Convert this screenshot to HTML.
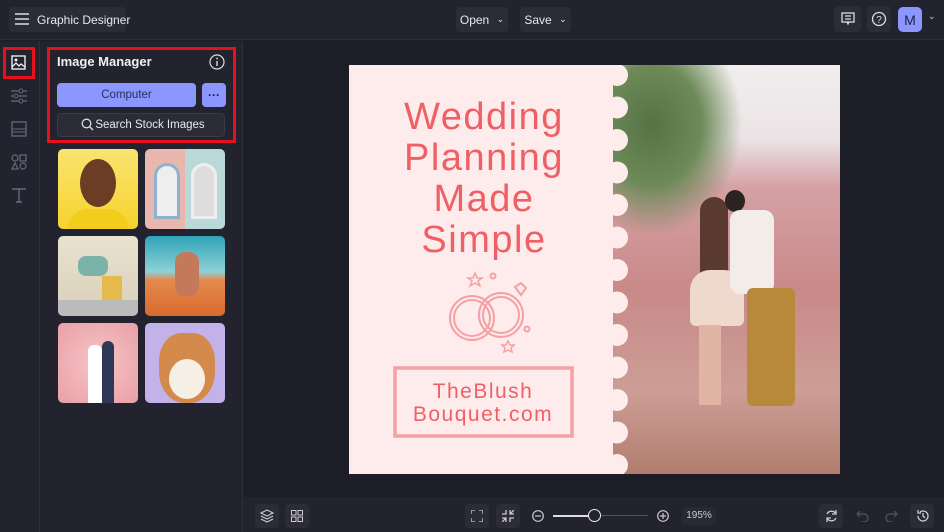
<!DOCTYPE html>
<html><head><meta charset="utf-8"><style>
*{box-sizing:border-box;margin:0;padding:0}
body{width:944px;height:532px;overflow:hidden;background:#1c1d27;font-family:"Liberation Sans",sans-serif;color:#e6e7ee;position:relative}
.abs{position:absolute}
.top{left:0;top:0;width:944px;height:40px;background:#22232e;border-bottom:1px solid #2d2e3a}
.btn{position:absolute;background:#2b2c38;border-radius:4px;font-size:12px;color:#e8e8f0;display:flex;align-items:center;justify-content:center;white-space:nowrap}
.rail{left:0;top:41px;width:40px;height:491px;background:#22232e;border-right:1px solid #2f303c}
.panel{left:40px;top:41px;width:203px;height:491px;background:#22232e;border-right:1px solid #2f303c}
.th{position:absolute;width:80px;height:80px;border-radius:5px;overflow:hidden}
.bottom{left:243px;top:497px;width:701px;height:35px;background:#22232e}
.ib{position:absolute;top:504px;width:24px;height:24px;background:#2b2c38;border-radius:4px}
svg{position:absolute}
</style></head><body>
<div class="abs top"></div>
<div class="btn" style="left:9px;top:7px;width:117px;height:25px;justify-content:flex-start;padding-left:28px;font-size:12px">Graphic Designer</div>
<svg style="left:15px;top:13px" width="14" height="12"><path d="M0 1H14M0 6H14M0 11H14" stroke="#ddd" stroke-width="1.5"/></svg>
<div class="btn" style="left:456px;top:7px;width:52px;height:25px">Open&nbsp;<span style="font-size:9px;margin-left:4px">&#8964;</span></div>
<div class="btn" style="left:520px;top:7px;width:51px;height:25px">Save&nbsp;<span style="font-size:9px;margin-left:4px">&#8964;</span></div>
<div class="btn" style="left:834px;top:6px;width:27px;height:26px"></div>
<svg style="left:841px;top:12px" width="14" height="14"><rect x="1" y="1" width="12" height="9" fill="none" stroke="#ddd" stroke-width="1.3"/><path d="M4 4H10M4 7H10M6 10L7 12L8 10" stroke="#ddd" stroke-width="1.2" fill="none"/></svg>
<div class="btn" style="left:867px;top:6px;width:24px;height:26px"></div>
<svg style="left:871px;top:11px" width="16" height="16"><circle cx="8" cy="8" r="6.5" fill="none" stroke="#ddd" stroke-width="1.3"/><text x="8" y="12" font-size="10" text-anchor="middle" fill="#ddd" font-family="Liberation Sans">?</text></svg>
<div class="btn" style="left:898px;top:7px;width:24px;height:25px;background:#8b97ff;color:#1e2040;font-size:14px;border-radius:5px">M</div>
<div class="abs" style="left:928px;top:11px;font-size:9px;color:#ccc">&#8964;</div>

<div class="abs rail"></div>
<div class="abs" style="left:3px;top:47px;width:32px;height:32px;border:3px solid #e8101a"></div>
<svg style="left:11px;top:55px" width="16" height="16"><rect x="1" y="1" width="13" height="13" fill="none" stroke="#eee" stroke-width="1.4"/><circle cx="5" cy="5" r="1.5" fill="#eee"/><path d="M1 12L5 8L8 11L10 9L14 12" stroke="#eee" fill="none" stroke-width="1.3"/></svg>
<svg style="left:11px;top:88px" width="16" height="16"><path d="M0 3H16M0 8H16M0 13H16" stroke="#666a78" stroke-width="1.3"/><circle cx="10" cy="3" r="2" fill="#22232e" stroke="#666a78"/><circle cx="5" cy="8" r="2" fill="#22232e" stroke="#666a78"/><circle cx="10" cy="13" r="2" fill="#22232e" stroke="#666a78"/></svg>
<svg style="left:11px;top:121px" width="16" height="16"><rect x="1" y="1" width="14" height="14" fill="none" stroke="#666a78" stroke-width="1.3"/><path d="M1 8H15M1 11H15" stroke="#666a78"/></svg>
<svg style="left:11px;top:154px" width="16" height="16"><circle cx="4" cy="4" r="3" fill="none" stroke="#666a78" stroke-width="1.2"/><rect x="9" y="1" width="6" height="6" fill="none" stroke="#666a78" stroke-width="1.2"/><path d="M4 9L7 15H1Z" fill="none" stroke="#666a78" stroke-width="1.2"/><circle cx="12" cy="12" r="3" fill="none" stroke="#666a78" stroke-width="1.2"/></svg>
<svg style="left:11px;top:187px" width="16" height="16"><path d="M1 2H15M8 2V15M5 15H11" stroke="#666a78" stroke-width="1.4" fill="none"/></svg>

<div class="abs panel"></div>
<div class="abs" style="left:47px;top:47px;width:189px;height:96px;border:3px solid #e8101a"></div>
<div class="abs" style="left:57px;top:54px;font-size:13px;font-weight:bold;color:#f0f0f5">Image Manager</div>
<svg style="left:209px;top:54px" width="16" height="16"><circle cx="8" cy="8" r="7" fill="none" stroke="#ddd" stroke-width="1.2"/><path d="M8 7V12" stroke="#ddd" stroke-width="1.4"/><circle cx="8" cy="4.5" r="0.9" fill="#ddd"/></svg>
<div class="btn" style="left:57px;top:83px;width:139px;height:24px;background:#8b97ff;color:#2a2d5a;font-size:11.5px">Computer</div>
<div class="btn" style="left:202px;top:83px;width:24px;height:24px;background:#8b97ff;color:#1e2040;font-weight:bold;font-size:12px">···</div>
<div class="btn" style="left:57px;top:113px;width:168px;height:24px;border:1px solid #3a3b48;font-size:11.5px;padding-left:18px">Search Stock Images</div>
<svg style="left:81px;top:118px" width="13" height="13"><circle cx="5.5" cy="5.5" r="4.3" fill="none" stroke="#ddd" stroke-width="1.3"/><path d="M8.5 8.5L12 12" stroke="#ddd" stroke-width="1.4"/></svg>

<div class="th" style="left:58px;top:149px;background:linear-gradient(#f8e571,#f7d22d)"><div class="abs" style="left:22px;top:10px;width:36px;height:48px;border-radius:50%;background:#6b3d24"></div><div class="abs" style="left:10px;top:60px;width:60px;height:24px;border-radius:20px 20px 0 0;background:#f3cd1c"></div></div>
<div class="th" style="left:145px;top:149px;background:linear-gradient(90deg,#e9b7ae 50%,#b9d9d8 50%)"><div class="abs" style="left:9px;top:14px;width:26px;height:56px;border-radius:13px 13px 0 0;background:#eee;border:3px solid #8fb1d0"></div><div class="abs" style="left:46px;top:14px;width:26px;height:56px;border-radius:13px 13px 0 0;background:#ddd;border:3px solid #eee"></div></div>
<div class="th" style="left:58px;top:236px;background:linear-gradient(#e8e2d0,#dcd3bd 80%,#bbb 80%)"><div class="abs" style="left:20px;top:20px;width:30px;height:20px;background:#7ab3a8;border-radius:8px"></div><div class="abs" style="left:44px;top:40px;width:20px;height:24px;background:#e6b94b"></div></div>
<div class="th" style="left:145px;top:236px;background:linear-gradient(#2fa4b8,#8fd0d6 45%,#e58a4c 55%,#d96a2f)"><div class="abs" style="left:30px;top:16px;width:24px;height:44px;background:#c47a5a;border-radius:10px"></div></div>
<div class="th" style="left:58px;top:323px;background:radial-gradient(#f7c4c7,#e8a0a7)"><div class="abs" style="left:30px;top:22px;width:14px;height:58px;background:#fff;border-radius:6px 6px 0 0"></div><div class="abs" style="left:44px;top:18px;width:12px;height:62px;background:#2e3856;border-radius:6px 6px 0 0"></div></div>
<div class="th" style="left:145px;top:323px;background:#c3b2ea"><div class="abs" style="left:14px;top:10px;width:56px;height:70px;background:#d48a4a;border-radius:40% 40% 45% 45%"></div><div class="abs" style="left:24px;top:36px;width:36px;height:40px;background:#f6efe6;border-radius:50%"></div></div>

<!-- canvas -->
<div class="abs" style="left:612px;top:65px;width:228px;height:409px;background:radial-gradient(ellipse 90px 110px at 40px 60px,#557244 0%,#6d8a58 55%,rgba(0,0,0,0) 100%),linear-gradient(#f1eeee 0%,#ebe4e6 18%,#d5a0a4 30%,#c98989 55%,#cc9e96 80%,#b17c6e 100%)"></div>
<div class="abs" style="left:700px;top:197px;width:28px;height:110px;background:#5a3a2e;border-radius:14px 14px 4px 4px"></div>
<div class="abs" style="left:690px;top:270px;width:54px;height:56px;background:#efd8cc;border-radius:20px 20px 6px 6px"></div>
<div class="abs" style="left:725px;top:190px;width:20px;height:22px;background:#2b2222;border-radius:50%"></div>
<div class="abs" style="left:730px;top:210px;width:44px;height:84px;background:#f2ede9;border-radius:10px"></div>
<div class="abs" style="left:747px;top:288px;width:48px;height:118px;background:#b8893a;border-radius:6px"></div>
<div class="abs" style="left:699px;top:325px;width:22px;height:80px;background:#e0b5a3"></div>

<svg style="left:349px;top:65px" width="282" height="409">
<defs><clipPath id="c"><rect width="282" height="409"/></clipPath></defs>
<g clip-path="url(#c)">
<rect width="264" height="409" fill="#fdeceb"/>
<g fill="#fdeceb">
<circle cx="268" cy="10" r="11"/><circle cx="268" cy="42.5" r="11"/><circle cx="268" cy="75" r="11"/><circle cx="268" cy="107.5" r="11"/><circle cx="268" cy="140" r="11"/><circle cx="268" cy="172.5" r="11"/><circle cx="268" cy="205" r="11"/><circle cx="268" cy="237.5" r="11"/><circle cx="268" cy="270" r="11"/><circle cx="268" cy="302.5" r="11"/><circle cx="268" cy="335" r="11"/><circle cx="268" cy="367.5" r="11"/><circle cx="268" cy="400" r="11"/>
</g></g>
<g fill="#ef6066" font-family="Liberation Sans" font-size="38" text-anchor="middle" style="letter-spacing:1.5px">
<text x="135" y="64">Wedding</text><text x="135" y="105">Planning</text><text x="135" y="146">Made</text><text x="135" y="187">Simple</text></g>
<g fill="none" stroke="#f4a1a4" stroke-width="2">
<circle cx="123" cy="253" r="22"/><circle cx="123" cy="253" r="18"/><circle cx="152" cy="250" r="22"/><circle cx="152" cy="250" r="18"/>
<path d="M166 222L172 218L177 223L172 230Z"/><circle cx="144" cy="211" r="2.5"/><circle cx="178" cy="264" r="2.5"/>
<path d="M126 208L128 213L133 213L129 216L131 221L126 218L121 221L123 216L119 213L124 213Z" stroke-width="1.5"/>
<path d="M159 276L161 280L165 280L162 283L163 287L159 285L155 287L156 283L153 280L157 280Z" stroke-width="1.5"/>
<rect x="46" y="303" width="177" height="68" stroke-width="3.5"/></g>
<g fill="#ef6066" font-family="Liberation Sans" font-size="21" text-anchor="middle" style="letter-spacing:1.5px"><text x="134" y="333">TheBlush</text><text x="134" y="356">Bouquet.com</text></g>
</svg>

<div class="abs bottom"></div>
<div class="ib" style="left:255px"></div><svg style="left:260px;top:509px" width="14" height="14"><path d="M7 1L13 4L7 7L1 4Z M1 7L7 10L13 7 M1 10L7 13L13 10" fill="none" stroke="#ccc" stroke-width="1.2"/></svg>
<div class="ib" style="left:285px"></div><svg style="left:291px;top:510px" width="12" height="12"><rect x="0.5" y="0.5" width="4.5" height="4.5" fill="none" stroke="#ccc"/><rect x="7" y="0.5" width="4.5" height="4.5" fill="none" stroke="#ccc"/><rect x="0.5" y="7" width="4.5" height="4.5" fill="none" stroke="#ccc"/><rect x="7" y="7" width="4.5" height="4.5" fill="none" stroke="#ccc"/></svg>
<div class="ib" style="left:465px"></div><svg style="left:471px;top:510px" width="12" height="12"><path d="M0 4V0H4M8 0H12V4M12 8V12H8M4 12H0V8" fill="none" stroke="#ccc" stroke-width="1.3"/></svg>
<div class="ib" style="left:496px"></div><svg style="left:502px;top:510px" width="12" height="12"><path d="M0 4H4V0M8 0V4H12M12 8H8V12M4 12V8H0M8 4L12 0M4 8L0 12" fill="none" stroke="#ccc" stroke-width="1.3"/></svg>
<svg style="left:532px;top:510px" width="12" height="12"><circle cx="6" cy="6" r="5.3" fill="none" stroke="#ccc" stroke-width="1.2"/><path d="M3 6H9" stroke="#ccc" stroke-width="1.2"/></svg>
<div class="abs" style="left:553px;top:515px;width:42px;height:1.5px;background:#ddd"></div>
<div class="abs" style="left:595px;top:515px;width:53px;height:1px;background:#555"></div>
<div class="abs" style="left:588px;top:509px;width:13px;height:13px;border-radius:50%;border:1.5px solid #eee;background:#22232e"></div>
<svg style="left:657px;top:510px" width="12" height="12"><circle cx="6" cy="6" r="5.3" fill="none" stroke="#ccc" stroke-width="1.2"/><path d="M3 6H9M6 3V9" stroke="#ccc" stroke-width="1.2"/></svg>
<div class="abs" style="left:682px;top:507px;width:34px;height:18px;background:#282935;border-radius:3px;font-size:10px;color:#ccc;text-align:center;line-height:18px">195%</div>
<div class="ib" style="left:819px"></div><svg style="left:825px;top:509px" width="13" height="14"><path d="M11 5A5 5 0 0 0 2 5M2 9A5 5 0 0 0 11 9M11 1V5H7M2 13V9H6" fill="none" stroke="#ccc" stroke-width="1.3"/></svg>
<svg style="left:856px;top:510px" width="13" height="12"><path d="M4 1L1 4L4 7M1 4H8A4 4 0 0 1 8 12H5" fill="none" stroke="#555" stroke-width="1.2"/></svg>
<svg style="left:885px;top:510px" width="13" height="12"><path d="M9 1L12 4L9 7M12 4H5A4 4 0 0 0 5 12H8" fill="none" stroke="#555" stroke-width="1.2"/></svg>
<div class="ib" style="left:910px"></div><svg style="left:916px;top:509px" width="13" height="14"><path d="M2 7A5 5 0 1 0 4 3M2 1V4H5M7 4V7L9 9" fill="none" stroke="#ccc" stroke-width="1.3"/></svg>
</body></html>
